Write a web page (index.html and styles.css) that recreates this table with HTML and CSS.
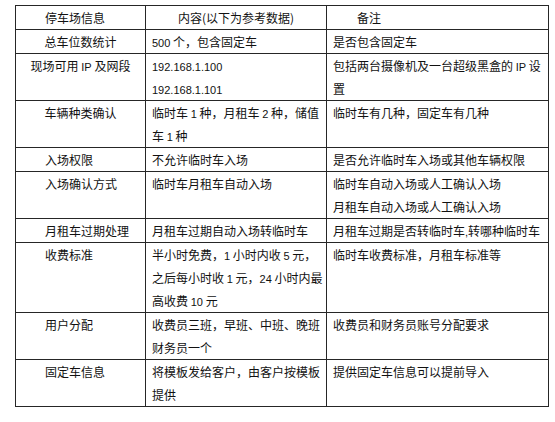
FILE: index.html
```html
<!DOCTYPE html>
<html lang="zh-CN">
<head>
<meta charset="utf-8">
<title>停车场信息</title>
<link rel="stylesheet" href="styles.css">
</head>
<body>
<div class="page">
<table class="info">
<colgroup><col class="c1"><col class="c2"><col class="c3"></colgroup>
<tr>
<td class="k"><div class="ln">停车场信息</div></td>
<td class="v center"><div class="ln">内容(以下为参考数据)</div></td>
<td class="v indent"><div class="ln">备注</div></td>
</tr>
<tr>
<td class="k center"><div class="ln">总车位数统计</div></td>
<td class="v"><div class="ln"><span class="n">500</span> 个，包含固定车</div></td>
<td class="v"><div class="ln">是否包含固定车</div></td>
</tr>
<tr>
<td class="k center"><div class="ln">现场可用 <span class="n">IP</span> 及网段</div></td>
<td class="v"><div class="ln"><span class="n">192.168.1.100</span></div><div class="ln"><span class="n">192.168.1.101</span></div></td>
<td class="v"><div class="ln">包括两台摄像机及一台超级黑盒的 <span class="n">IP</span> 设</div><div class="ln">置</div></td>
</tr>
<tr>
<td class="k center"><div class="ln">车辆种类确认</div></td>
<td class="v"><div class="ln">临时车 <span class="n">1</span> 种，月租车 <span class="n">2</span> 种，储值</div><div class="ln">车 <span class="n">1</span> 种</div></td>
<td class="v"><div class="ln">临时车有几种，固定车有几种</div></td>
</tr>
<tr>
<td class="k"><div class="ln">入场权限</div></td>
<td class="v"><div class="ln">不允许临时车入场</div></td>
<td class="v"><div class="ln">是否允许临时车入场或其他车辆权限</div></td>
</tr>
<tr>
<td class="k"><div class="ln">入场确认方式</div></td>
<td class="v"><div class="ln">临时车月租车自动入场</div></td>
<td class="v"><div class="ln">临时车自动入场或人工确认入场</div><div class="ln">月租车自动入场或人工确认入场</div></td>
</tr>
<tr>
<td class="k"><div class="ln">月租车过期处理</div></td>
<td class="v"><div class="ln">月租车过期自动入场转临时车</div></td>
<td class="v"><div class="ln">月租车过期是否转临时车<span class="n">,</span>转哪种临时车</div></td>
</tr>
<tr>
<td class="k"><div class="ln">收费标准</div></td>
<td class="v"><div class="ln">半小时免费，<span class="n">1</span> 小时内收 <span class="n">5</span> 元，</div><div class="ln">之后每小时收 <span class="n">1</span> 元，<span class="n">24</span> 小时内最</div><div class="ln">高收费 <span class="n">10</span> 元</div></td>
<td class="v"><div class="ln">临时车收费标准，月租车标准等</div></td>
</tr>
<tr>
<td class="k"><div class="ln">用户分配</div></td>
<td class="v"><div class="ln">收费员三班，早班、中班、晚班</div><div class="ln">财务员一个</div></td>
<td class="v"><div class="ln">收费员和财务员账号分配要求</div></td>
</tr>
<tr>
<td class="k"><div class="ln">固定车信息</div></td>
<td class="v"><div class="ln">将模板发给客户，由客户按模板</div><div class="ln">提供</div></td>
<td class="v"><div class="ln">提供固定车信息可以提前导入</div></td>
</tr>
</table>
</div>
</body>
</html>
```
FILE: styles.css
```css
html, body {
  margin: 0;
  padding: 0;
  background: #ffffff;
}
.page {
  padding: 5px 0 0 15px;
  font-family: "Noto Sans CJK SC", sans-serif;
  font-size: 12px;
  color: #111111;
}
.info {
  border-collapse: collapse;
  table-layout: fixed;
  width: 533px;
}
.c1 { width: 130px; }
.c2 { width: 181px; }
.c3 { width: 222px; }
.info td {
  border: 1px solid #262626;
  padding: 0 0 0 6px;
  vertical-align: top;
  white-space: nowrap;
}
.ln {
  height: 23px;
  line-height: 23px;
  overflow: visible;
}
.info td.k {
  padding-left: 29px;
}
.info td.center {
  padding-left: 0;
  text-align: center;
}
.info td.indent {
  padding-left: 30px;
}
.n {
  font-family: "Liberation Sans", sans-serif;
  font-size: 11px;
  line-height: 1;
}
```
